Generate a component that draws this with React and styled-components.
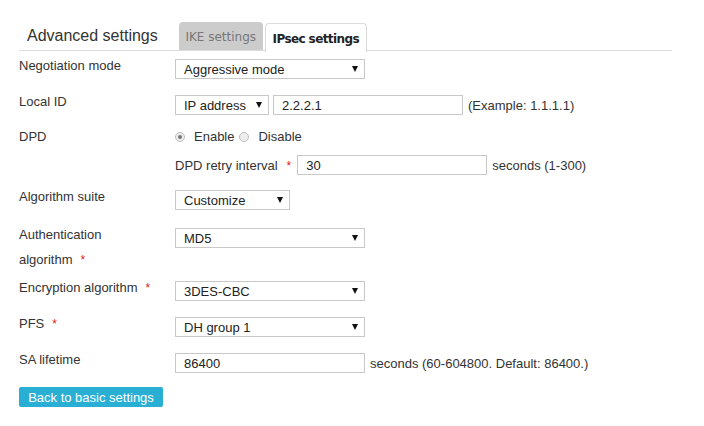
import React from "react";
import styled, { createGlobalStyle } from "styled-components";

const GlobalStyle = createGlobalStyle`
  html, body {
    margin: 0;
    padding: 0;
    background: #fff;
  }
  body {
    font-family: "Liberation Sans", Arial, sans-serif;
    font-size: 13px;
    color: #333;
  }
`;

const Page = styled.div`
  padding: 22px 0 0 19px;
  width: 653px;
`;

const Header = styled.div`
  display: flex;
  align-items: flex-end;
  border-bottom: 1px solid #dcdcdc;
  height: 28px;
`;

const Title = styled.h1`
  margin: 0 21px 0 8px;
  font-size: 16px;
  font-weight: normal;
  line-height: 28px;
  color: #333;
`;

const Tabs = styled.div`
  display: flex;
  gap: 2px;
  align-self: stretch;
`;

const Tab = styled.div`
  box-sizing: border-box;
  width: ${(p) => p.$w}px;
  height: ${(p) => (p.$active ? 29 : 28)}px;
  display: flex;
  align-items: center;
  justify-content: center;
  padding-top: 2px;
  font-family: "DejaVu Sans", Verdana, sans-serif;
  font-size: 12px;
  border-radius: 4px 4px 0 0;
  background: ${(p) => (p.$active ? "#fff" : "#cccccc")};
  color: ${(p) => (p.$active ? "#222" : "#777")};
  font-weight: ${(p) => (p.$active ? "bold" : "normal")};
  letter-spacing: ${(p) => (p.$active ? "-0.6px" : "0")};
  border: ${(p) => (p.$active ? "1px solid #dcdcdc" : "none")};
  border-bottom: none;
  position: relative;
  top: ${(p) => (p.$active ? 1 : 0)}px;
`;

const Form = styled.div`
  margin-top: 2px;
`;

const Row = styled.div`
  display: flex;
  box-sizing: border-box;
  min-height: ${(p) => p.$min || 36}px;
  padding-bottom: ${(p) => (p.$pb === undefined ? 4 : p.$pb)}px;
`;

const Label = styled.div`
  width: 156px;
  flex-shrink: 0;
  line-height: 25px;
`;

const Star = styled.span`
  color: #e02020;
  font-size: 12px;
  margin-left: ${(p) => p.$gap || 8}px;
  margin-right: ${(p) => p.$after || 0}px;
`;

const Content = styled.div`
  display: flex;
  flex-direction: column;
  padding-top: ${(p) => (p.$flat ? 0 : 6)}px;
`;

const Line = styled.div`
  display: flex;
  align-items: center;
  gap: ${(p) => p.$gap || 4}px;
  height: ${(p) => p.$h || 20}px;
  margin-top: ${(p) => p.$mt || 0}px;
  margin-bottom: ${(p) => p.$mb || 0}px;
`;

const SelectWrap = styled.div`
  position: relative;
  width: ${(p) => p.$w}px;
  height: 20px;
`;

const Select = styled.select`
  appearance: none;
  -webkit-appearance: none;
  box-sizing: border-box;
  width: 100%;
  height: 20px;
  margin: 0;
  padding: 0 16px 0 8px;
  border: 1px solid #c8c8c8;
  border-radius: 0;
  background: #fff;
  font-family: "Liberation Sans", Arial, sans-serif;
  font-size: 13px;
  color: #222;
  outline: none;
`;

const Arrow = styled.span`
  position: absolute;
  right: 7px;
  top: 7px;
  width: 0;
  height: 0;
  border-left: 3px solid transparent;
  border-right: 3px solid transparent;
  border-top: 6px solid #111;
  pointer-events: none;
`;

const Input = styled.input`
  box-sizing: border-box;
  width: ${(p) => p.$w || 190}px;
  height: 20px;
  margin: 0;
  padding: 0 8px;
  border: 1px solid #c8c8c8;
  border-radius: 0;
  font-family: "Liberation Sans", Arial, sans-serif;
  font-size: 13px;
  color: #222;
  outline: none;
`;

const Hint = styled.span`
  margin-left: 1px;
  color: #333;
`;

const RadioLabel = styled.label`
  display: inline-flex;
  align-items: center;
  margin-right: 1px;
`;

const RadioDot = styled.span`
  box-sizing: border-box;
  width: 10px;
  height: 10px;
  border-radius: 50%;
  border: 1px solid #bdbdbd;
  background: #eee;
  margin-right: 9px;
  position: relative;
  &::after {
    content: "";
    display: ${(p) => (p.$checked ? "block" : "none")};
    position: absolute;
    left: 2px;
    top: 2px;
    width: 4px;
    height: 4px;
    border-radius: 50%;
    background: #777;
  }
`;

const SubLabel = styled.span``;

const Button = styled.button`
  margin-top: 4px;
  height: 20px;
  width: 144px;
  padding: 0;
  border: none;
  border-radius: 2px;
  background: #29afd4;
  color: #fff;
  font-family: "Liberation Sans", Arial, sans-serif;
  font-size: 13px;
`;

function Dropdown({ width, value }) {
  return (
    <SelectWrap $w={width}>
      <Select defaultValue={value}>
        <option>{value}</option>
      </Select>
      <Arrow />
    </SelectWrap>
  );
}

export default function App() {
  return (
    <Page>
      <GlobalStyle />
      <Header>
        <Title>Advanced settings</Title>
        <Tabs>
          <Tab $w={84}>IKE settings</Tab>
          <Tab $w={102} $active>IPsec settings</Tab>
        </Tabs>
      </Header>

      <Form>
        <Row>
          <Label>Negotiation mode</Label>
          <Content>
            <Dropdown width={190} value="Aggressive mode" />
          </Content>
        </Row>

        <Row $min={35}>
          <Label>Local ID</Label>
          <Content>
            <Line>
              <Dropdown width={94} value="IP address" />
              <Input defaultValue="2.2.2.1" />
              <Hint>(Example: 1.1.1.1)</Hint>
            </Line>
          </Content>
        </Row>

        <Row>
          <Label>DPD</Label>
          <Content $flat>
            <Line $h={25} $gap={0}>
              <RadioLabel>
                <RadioDot $checked />
                Enable
              </RadioLabel>
              <RadioLabel>
                <RadioDot />
                Disable
              </RadioLabel>
            </Line>
            <Line $mt={6} $mb={5} $gap={4}>
              <SubLabel>
                DPD retry interval<Star $gap={9} $after={2}>*</Star>
              </SubLabel>
              <Input defaultValue="30" />
              <Hint>seconds (1-300)</Hint>
            </Line>
          </Content>
        </Row>

        <Row $min={38}>
          <Label>Algorithm suite</Label>
          <Content>
            <Dropdown width={115} value="Customize" />
          </Content>
        </Row>

        <Row $pb={2}>
          <Label>
            Authentication
            <br />
            algorithm<Star>*</Star>
          </Label>
          <Content>
            <Dropdown width={190} value="MD5" />
          </Content>
        </Row>

        <Row>
          <Label>
            Encryption algorithm<Star>*</Star>
          </Label>
          <Content>
            <Dropdown width={190} value="3DES-CBC" />
          </Content>
        </Row>

        <Row>
          <Label>
            PFS<Star>*</Star>
          </Label>
          <Content>
            <Dropdown width={190} value="DH group 1" />
          </Content>
        </Row>

        <Row>
          <Label>SA lifetime</Label>
          <Content>
            <Line>
              <Input defaultValue="86400" />
              <Hint>seconds (60-604800. Default: 86400.)</Hint>
            </Line>
          </Content>
        </Row>

        <Button>Back to basic settings</Button>
      </Form>
    </Page>
  );
}
